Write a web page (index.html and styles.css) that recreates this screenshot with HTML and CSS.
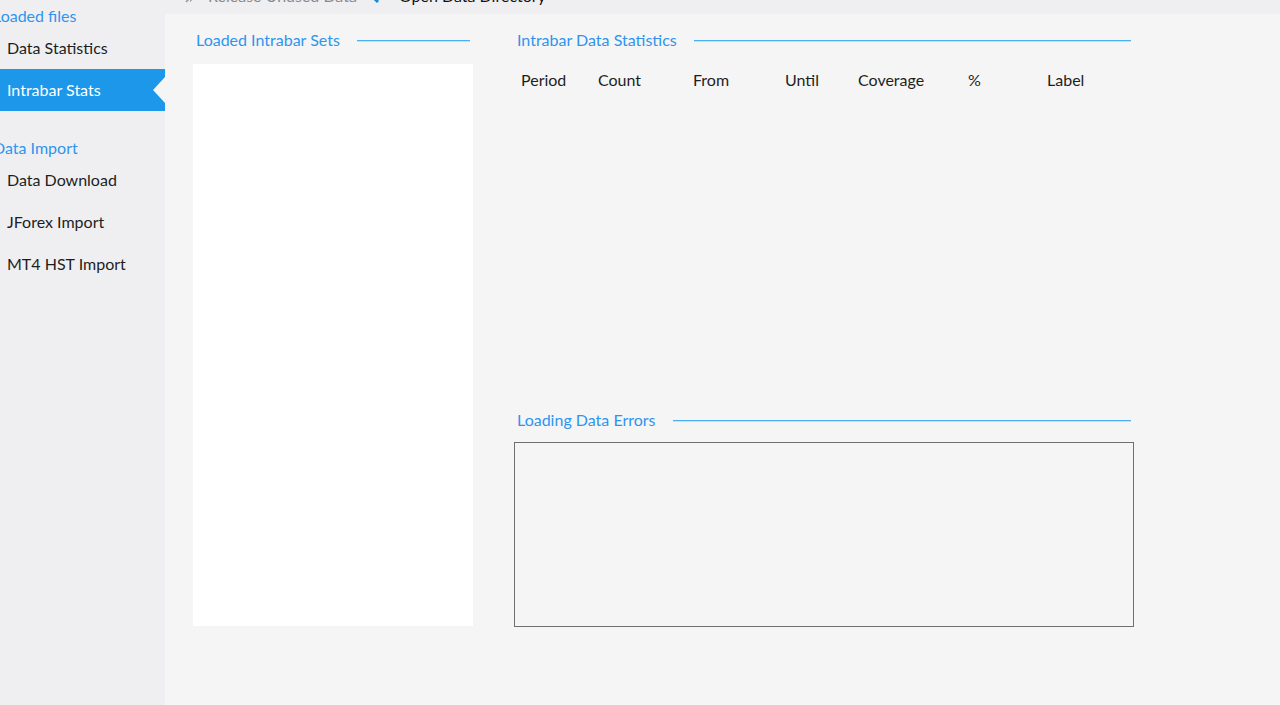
FILE: index.html
```html
<!DOCTYPE html>
<html>
<head>
<meta charset="utf-8">
<link rel="stylesheet" href="styles.css">
</head>
<body>
<div class="app">
  <aside class="sidebar">
    <div class="group-title first">Loaded files</div>
    <div class="nav-item">Data Statistics</div>
    <div class="nav-item selected">Intrabar Stats<span class="notch"></span></div>
    <div class="group-title">Data Import</div>
    <div class="nav-item">Data Download</div>
    <div class="nav-item">JForex Import</div>
    <div class="nav-item">MT4 HST Import</div>
  </aside>
  <main class="main">
    <div class="toolbar">
      <div class="tool disabled">
        <svg class="tool-icon" width="18" height="18" viewBox="0 0 18 18"><path d="M3 16 L8 11 M6 6 L12 12 M9 3 L15 9 L12 10 L8 14 Z" fill="none" stroke="#9a9a9a" stroke-width="1.6"/></svg>
        <span>Release Unused Data</span>
      </div>
      <div class="tool">
        <svg class="tool-icon" width="16" height="18" viewBox="0 0 16 18"><path d="M11 2 L4 9 L11 16" fill="none" stroke="#1e88d8" stroke-width="3"/></svg>
        <span class="tool-label">Open Data Directory</span>
      </div>
    </div>
    <div class="content">
      <section class="col-left">
        <div class="section-head"><span>Loaded Intrabar Sets</span><i class="rule"></i></div>
        <div class="list-box"></div>
      </section>
      <section class="col-right">
        <div class="section-head"><span>Intrabar Data Statistics</span><i class="rule"></i></div>
        <div class="stats">
          <div class="stats-head">
            <span>Period</span><span>Count</span><span>From</span><span>Until</span><span>Coverage</span><span>%</span><span>Label</span>
          </div>
        </div>
        <div class="section-head errors-head"><span>Loading Data Errors</span><i class="rule"></i></div>
        <div class="errors-box"></div>
      </section>
    </div>
  </main>
</div>
</body>
</html>
```
FILE: styles.css
```css
html, body {
  margin: 0;
  padding: 0;
  height: 100%;
  overflow: hidden;
}
body {
  font-family: Lato, "Open Sans", sans-serif;
  font-size: 16px;
  color: #1e1e1e;
  background: #f5f5f5;
}
.app {
  display: flex;
  height: 705px;
}
.sidebar {
  width: 165px;
  flex: none;
  background: #efeff2;
  display: flex;
  flex-direction: column;
  overflow: hidden;
}
.group-title {
  color: #2f94ee;
  height: 22px;
  line-height: 22px;
  margin-left: -7px;
  padding-top: 26px;
  white-space: nowrap;
}
.group-title.first {
  padding-top: 5px;
}
.nav-item {
  position: relative;
  height: 42px;
  line-height: 42px;
  padding-left: 7px;
  white-space: nowrap;
}
.nav-item.selected {
  background: #1c97ea;
  color: #ffffff;
}
.notch {
  position: absolute;
  right: 0;
  top: 8px;
  width: 0;
  height: 0;
  border-top: 13px solid transparent;
  border-bottom: 13px solid transparent;
  border-right: 12px solid #f5f5f5;
}
.main {
  flex: 1;
  display: flex;
  flex-direction: column;
}
.toolbar {
  height: 14px;
  flex: none;
  background: #efeff2;
  overflow: hidden;
  display: flex;
  padding-left: 18px;
  gap: 10px;
}
.tool {
  display: flex;
  align-items: center;
  gap: 7px;
  margin-top: -16px;
  height: 22px;
  white-space: nowrap;
  color: #111;
}
.tool.disabled {
  color: #8a8a8a;
}
.tool-label {
  margin-left: 9px;
}
.content {
  flex: 1;
  background: #f5f5f5;
  display: flex;
  gap: 41px;
  padding: 15px 0 0 28px;
}
.col-left {
  width: 280px;
  display: flex;
  flex-direction: column;
}
.col-right {
  width: 620px;
  display: flex;
  flex-direction: column;
}
.section-head {
  display: flex;
  align-items: center;
  height: 22px;
  padding: 0 3px;
  margin-bottom: 13px;
  color: #2f94ee;
  white-space: nowrap;
  margin-top: -1px;
}
.rule {
  flex: 1;
  margin-left: 17px;
  margin-top: 3px;
  height: 0;
  border-top: 1px solid #4aaef0;
  border-bottom: 1px solid #bfe1f9;
}
.list-box {
  height: 562px;
  background: #ffffff;
  margin-top: 1px;
}
.stats {
  height: 346px;
  padding-top: 6px;
  box-sizing: border-box;
}
.stats-head {
  display: grid;
  grid-template-columns: 77px 95px 92px 73px 110px 79px 1fr;
  padding-left: 7px;
  height: 22px;
  line-height: 22px;
}
.stats-head span {
  white-space: nowrap;
}
.errors-head {
  margin-bottom: 12px;
}
.errors-box {
  height: 185px;
  box-sizing: border-box;
  border: 1px solid #6f6f6f;
  background: #f5f5f5;
}
```
